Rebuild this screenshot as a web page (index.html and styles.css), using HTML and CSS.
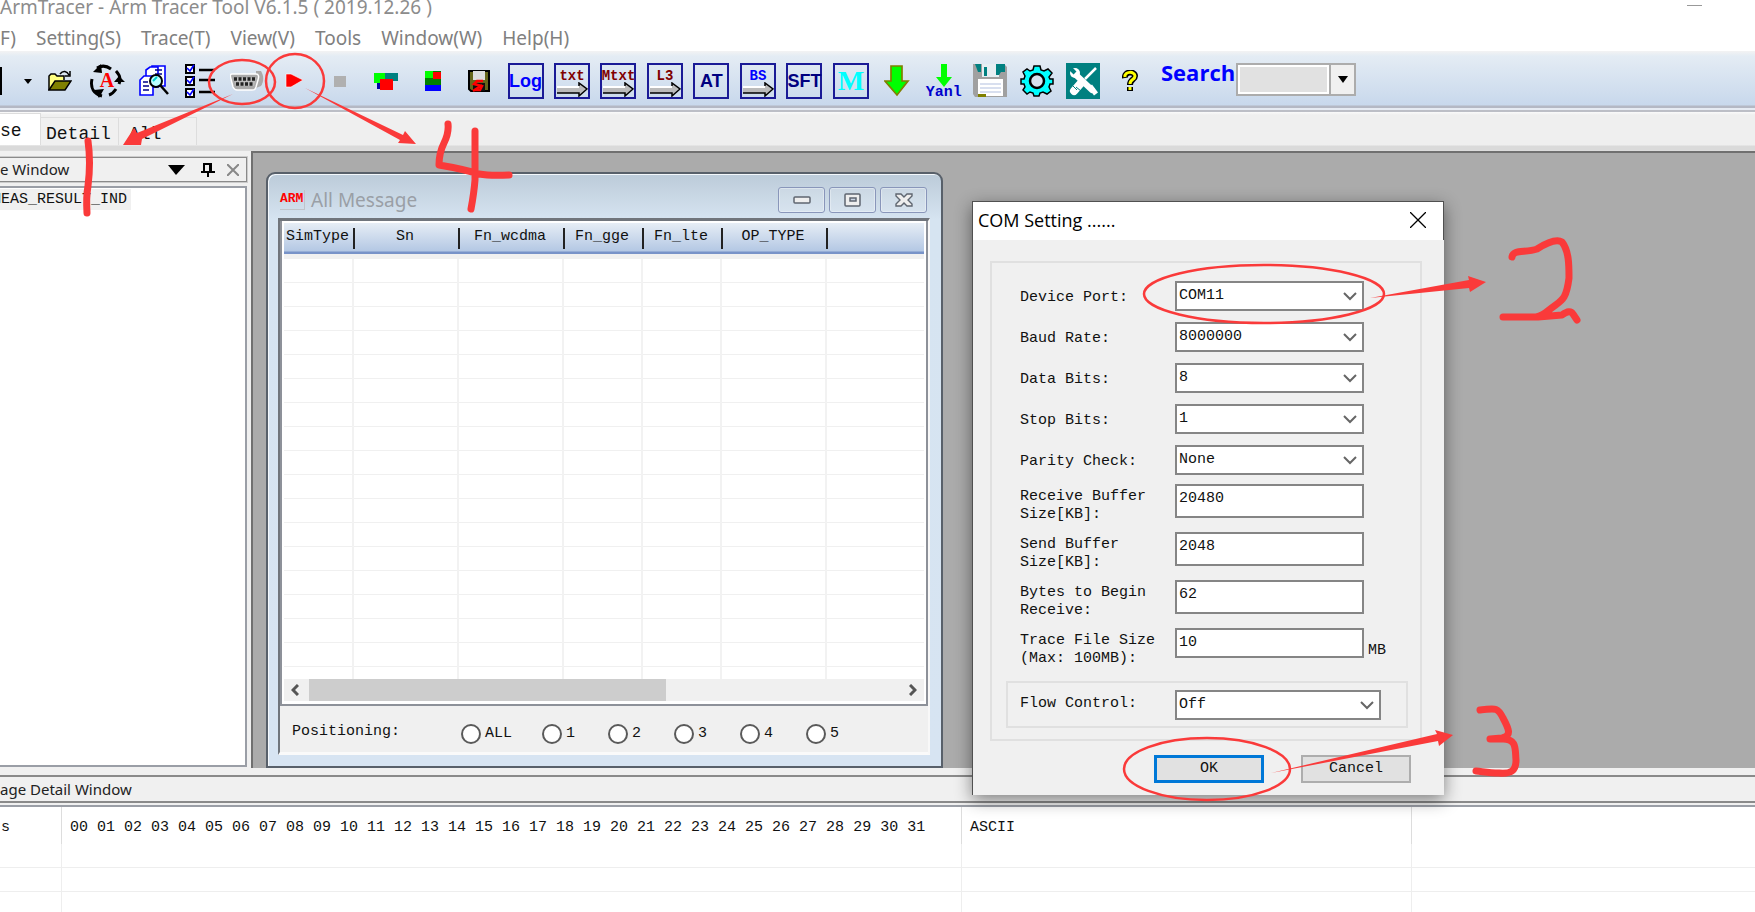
FILE: index.html
```html
<!DOCTYPE html>
<html lang="en">
<head>
<meta charset="utf-8">
<title>ArmTracer</title>
<link rel="stylesheet" href="styles.css">
</head>
<body>
<div class="app">
  <header class="titlebar">
    <span>ArmTracer - Arm Tracer Tool V6.1.5 ( 2019.12.26 )</span>
    <button class="minimize" aria-label="Minimize"></button>
  </header>
  <nav class="menubar">
    <button>F)</button><button>Setting(S)</button><button>Trace(T)</button><button>View(V)</button><button>Tools</button><button>Window(W)</button><button>Help(H)</button>
  </nav>
  <div class="toolbar">
    <div class="tool-start">
      <i class="stub"></i>
      <button aria-label="New options"><svg width="8" height="5"><path d="M0 0h8L4 5z"/></svg></button>
      <button aria-label="Open"><svg width="24" height="22" viewBox="0 0 24 22"><path d="M1 20V6l2-2h4l2 2h7v4" fill="#ffff80" stroke="#000" stroke-width="1.5"/><path d="M1 20l6-9h16l-6 9z" fill="#808000" stroke="#000" stroke-width="1.5"/><path d="M12 4c3-4 7-3 9 1M22 1v5h-5" fill="none" stroke="#000" stroke-width="1.5"/></svg></button>
    </div>
    <div class="tools">
      <button aria-label="Auto refresh"><svg width="36" height="36" viewBox="0 0 36 36"><g fill="none" stroke="#000" stroke-width="3"><path d="M8 5c5-3 10-2 14 1M27 8c4 4 5 8 3 13M27 26c-2 3-4 5-7 6M13 33C5 31 1 25 3 16"/></g><path d="M4 9l8-8 1 9zM25 19l5-6 6 6zM5 27l10-1-5 9z"/><text x="18" y="24" class="ic-a">A</text></svg></button>
      <button aria-label="Find in files"><svg width="32" height="34" viewBox="0 0 32 34"><g fill="#fff" stroke="#00f" stroke-width="1.6"><path d="M14 2h13v20H14z"/><path d="M8 6l4-3h8v20H8z"/><path d="M2 16l4-4h9v19H2z"/></g><path d="M17 6h7M17 10h7M5 18h5M5 22h6M5 26h6" stroke="#008" stroke-width="1.5"/><circle cx="18" cy="17" r="6" fill="#bff" stroke="#000" stroke-width="2"/><path d="M22 21l8 9" stroke="#000" stroke-width="2.5"/><path d="M15 17l4-4" stroke="#0cc" stroke-width="2"/></svg></button>
      <button aria-label="Filter list"><svg width="30" height="36" viewBox="0 0 30 36"><g fill="#fff" stroke="#000" stroke-width="2"><path d="M1 2h8v8H1zM1 14h8v8H1zM1 26h8v8H1z"/></g><path d="M2 5l3 3 4-6M2 17l3 3 4-6M2 29l3 3 4-6" fill="none" stroke="#00f" stroke-width="1.7"/><path d="M14 7h16M14 17h16M14 29h16" stroke="#000" stroke-width="2.5"/></svg></button>
      <button aria-label="COM setting"><svg width="34" height="22" viewBox="0 0 34 22"><path d="M26 1h5c3 5 3 10 0 15l-5 2z" fill="#aaa"/><path d="M2 4h24c3 0 3 3 2 6l-2 7c-1 3-2 3-4 3H7c-2 0-3-1-4-3L1 9c-1-3-1-5 1-5z" fill="#aaa" stroke="#fff" stroke-width="1.5"/><path d="M4 8h22l-2 8H6z" fill="#bbb"/><path d="M4 9h22M6 14h18" stroke="#222" stroke-width="3.5" stroke-dasharray="3 1.5"/></svg></button>
      <button aria-label="Start"><svg width="20" height="18" viewBox="0 0 20 18"><path d="M3 2h5l12 6-12 7H3z" fill="red" stroke="#fff" stroke-width=".6"/></svg></button>
      <button aria-label="Stop"><svg width="12" height="11"><path d="M0 0h12v11H0z" fill="#b0b0b0"/></svg></button>
      <button aria-label="Cascade"><svg width="24" height="18"><path d="M10 1h14v8H10z" fill="#008080"/><path d="M3 8h12v9H3z" fill="#00a"/><path d="M0 1h11v10H0z" fill="#0f0"/><path d="M6 7h13v11H6z" fill="red"/></svg></button>
      <button aria-label="Tile"><svg width="18" height="20"><path d="M1 0h16v20H1z" fill="#008000"/><path d="M1 0h8v7H1z" fill="#0f0"/><path d="M9 1h8v7H9z" fill="red"/><path d="M1 14h16v6H1z" fill="#00f"/></svg></button>
      <button aria-label="Save"><svg width="22" height="22" viewBox="0 0 22 22"><path d="M1 1h20v20H3l-2-2z" fill="#66661a" stroke="#000" stroke-width="2"/><path d="M5 1h12v9H5z" fill="#ddd"/><path d="M5 13h12v8H5z" fill="#111"/><path d="M15 11H9l-3 3 8 2-2 4H6M5 21l9-6" stroke="red" stroke-width="2.5" fill="none"/></svg></button>
      <button class="boxed log">Log</button>
      <button class="boxed conv"><span>txt</span><svg width="32" height="15"><use href="#arrow"/></svg></button>
      <button class="boxed conv"><span>Mtxt</span><svg width="32" height="15"><use href="#arrow"/></svg></button>
      <button class="boxed conv"><span>L3</span><svg width="32" height="15"><use href="#arrow"/></svg></button>
      <button class="boxed at">AT</button>
      <button class="boxed conv bs"><span>BS</span><svg width="32" height="15"><use href="#arrow"/></svg></button>
      <button class="boxed at">SFT</button>
      <button class="boxed m">M</button>
      <button aria-label="Download"><svg width="26" height="32" viewBox="0 0 26 32"><path d="M7 1h11v15h6L13 30 1 16h6z" fill="#0f0" stroke="#808000" stroke-width="1.7"/></svg></button>
      <button class="yanl"><svg width="16" height="23"><path d="M5 0h6v13h5l-8 10L0 13h5z" fill="#0f0"/></svg><span>Yanl</span></button>
      <button aria-label="Save all"><svg width="36" height="36" viewBox="0 0 36 36"><path d="M1 1h31l3 3v30H3l-2-3z" fill="#a0a0a0"/><path d="M10 1h17v13H10z" fill="#e6eef2"/><path d="M3 1h6v8H6zM24 1h9v8h-4l-2 3h-3zM12 4h3v9h-3z" fill="#008080"/><path d="M6 16h25v17H6z" fill="#fff"/><path d="M8 21h21M8 25h21M8 29h21" stroke="#ccd5ea" stroke-width="1.5"/><path d="M6 31h8v3H6z" fill="#808000"/></svg></button>
      <button aria-label="Options"><svg width="34" height="34" viewBox="-17 -17 34 34"><g fill="#0ff" stroke="#000" stroke-width="1.5"><path d="M-3-15h6l1 4 3 1 4-2 4 4-3 4 1 2h3v5h-3l-1 3 2 4-4 3-4-2-3 1-1 3h-5l-1-3-3-1-3 2-4-4 2-3-1-3h-3v-5h3l1-3-2-4 4-3 3 2 3-1z"/><circle r="7" fill="#d6e2ef" stroke-width="2.5"/></g></svg></button>
      <button aria-label="Tools"><svg width="34" height="36" viewBox="0 0 34 36"><path d="M0 0h34v36H0z" fill="#008080"/><path d="M10 12l16 15" stroke="#fff" stroke-width="6" stroke-linecap="round"/><circle cx="9" cy="10" r="5" fill="#fff"/><path d="M4 5l5 5" stroke="#008080" stroke-width="4"/><path d="M30 5L19 16" stroke="#fff" stroke-width="2.5"/><path d="M15 20l-7 8" stroke="#fff" stroke-width="8" stroke-linecap="round"/><path d="M6 22l5 5M10 24l5 4" stroke="#008080"/><path d="M24 23l6 8" stroke="#fff" stroke-width="5"/></svg></button>
      <button aria-label="Help"><svg width="16" height="22" viewBox="0 0 16 22"><g fill="none" stroke="#000" stroke-width="6"><path d="M3 8c-1-7 10-7 10-2 0 4-5 3-5 9M8 17v4"/></g><path d="M3 7c-1-6 10-6 10-1 0 4-5 3-5 8M8 17v3" fill="none" stroke="#ff0" stroke-width="3"/></svg></button>
    </div>
    <label class="search-label" for="search">Search</label>
    <div class="search-box"><input id="search" type="text"><button aria-label="Search history"><svg width="10" height="7"><path d="M0 0h10L5 7z"/></svg></button></div>
  </div>
  <div class="tabs">
    <button class="tab active">se</button><button class="tab">Detail</button><button class="tab last">All</button>
  </div>
  <main class="work">
    <aside class="side">
      <div class="side-head"><span>e Window</span>
        <button aria-label="Menu"><svg width="17" height="10"><path d="M0 0h17L8 10z"/></svg></button>
        <button aria-label="Pin"><svg width="14" height="14" fill="none" stroke="#000" stroke-width="2"><path d="M3 9V1h7v8M0 9h14M7 9v5M9 1v8"/></svg></button>
        <button aria-label="Close"><svg width="12" height="12" stroke="#888" stroke-width="2"><path d="M0 0l12 12M12 0L0 12"/></svg></button>
      </div>
      <div class="tree"><span>MEAS_RESULT_IND</span></div>
    </aside>
    <section class="mdi">
      <div class="child">
        <div class="child-title">
          <b class="arm">ARM</b><span>All Message</span>
          <button aria-label="Minimize"><svg width="18" height="10"><rect x="1" y="2" width="16" height="6" rx="1" fill="#eee" stroke="#5f6670" stroke-width="1.5"/></svg></button>
          <button aria-label="Maximize"><svg width="18" height="14"><rect x="1" y="1" width="15" height="12" rx="1" fill="#eee" stroke="#5f6670" stroke-width="1.5"/><path d="M6 5h6v3H6z" fill="#ccd6e4" stroke="#5f6670" stroke-width="1.5"/></svg></button>
          <button aria-label="Close"><svg width="18" height="14" viewBox="0 0 18 14"><path d="M1 1h5l3 3 3-3h5v2l-4 4 4 4v2h-5l-3-3-3 3H1v-2l4-4-4-4z" fill="#eee" stroke="#5f6670" stroke-width="1.4"/></svg></button>
        </div>
        <div class="child-body">
          <div class="list">
            <table class="messages">
              <colgroup><col class="c70"><col class="c105"><col class="c105"><col class="c79"><col class="c79"><col class="c105"><col></colgroup>
              <thead><tr><th>SimType</th><th>Sn</th><th>Fn_wcdma</th><th>Fn_gge</th><th>Fn_lte</th><th>OP_TYPE</th><th></th></tr></thead>
              <tbody><tr><td></td><td></td><td></td><td></td><td></td><td></td><td></td></tr></tbody>
            </table>
            <div class="scroll"><svg width="8" height="12"><path d="M7 1L2 6l5 5"/></svg><i></i><svg width="8" height="12"><path d="M1 1l5 5-5 5"/></svg></div>
          </div>
          <div class="positions">
            <span>Positioning:</span>
            <label class="all"><input type="radio" name="pos">ALL</label>
            <label><input type="radio" name="pos">1</label>
            <label><input type="radio" name="pos">2</label>
            <label><input type="radio" name="pos">3</label>
            <label><input type="radio" name="pos">4</label>
            <label><input type="radio" name="pos">5</label>
          </div>
        </div>
      </div>
    </section>
  </main>
  <section class="detail">
    <h2>age Detail Window</h2>
    <table>
      <colgroup><col class="d1"><col class="d2"><col class="d3"><col></colgroup>
      <thead><tr><th>s</th><th>00 01 02 03 04 05 06 07 08 09 10 11 12 13 14 15 16 17 18 19 20 21 22 23 24 25 26 27 28 29 30 31</th><th>ASCII</th><th></th></tr></thead>
      <tbody><tr><td></td><td></td><td></td><td></td></tr><tr><td></td><td></td><td></td><td></td></tr><tr><td></td><td></td><td></td><td></td></tr></tbody>
    </table>
  </section>

  <form class="dialog">
    <div class="dialog-title"><span>COM Setting ......</span><button type="button" aria-label="Close"><svg width="16" height="16" stroke="#000" stroke-width="1.3"><path d="M0 0l16 16M16 0L0 16"/></svg></button></div>
    <div class="group">
      <div class="fields">
        <div class="row"><label for="port">Device Port:</label><select id="port"><option>COM11</option></select></div>
        <div class="row"><label for="baud">Baud Rate:</label><select id="baud"><option>8000000</option></select></div>
        <div class="row"><label for="data">Data Bits:</label><select id="data"><option>8</option></select></div>
        <div class="row"><label for="stop">Stop Bits:</label><select id="stop"><option>1</option></select></div>
        <div class="row"><label for="parity">Parity Check:</label><select id="parity"><option>None</option></select></div>
      </div>
      <div class="fields sizes">
        <div class="row"><label for="rbuf">Receive Buffer Size[KB]:</label><input id="rbuf" type="text" value="20480"></div>
        <div class="row"><label for="sbuf">Send Buffer Size[KB]:</label><input id="sbuf" type="text" value="2048"></div>
        <div class="row"><label for="bytes">Bytes to Begin Receive:</label><input id="bytes" type="text" value="62"></div>
        <div class="row"><label for="trace">Trace File Size (Max: 100MB):</label><input id="trace" class="short" type="text" value="10"><span class="unit">MB</span></div>
      </div>
      <div class="flow"><label for="flow">Flow Control:</label><select id="flow"><option>Off</option></select></div>
    </div>
    <div class="actions"><button type="button" class="ok">OK</button><button type="button">Cancel</button></div>
  </form>

  <svg class="marks">
    <defs><g id="arrow"><path d="M1 4h22V1l8 6-8 7v-3H1z" fill="#bbb"/><path d="M1 5h22" stroke="#fff" stroke-width="2"/><path d="M1 11h22v3l8-7-8-6v3" fill="none" stroke="#000" stroke-width="1.5"/></g></defs>
    <g class="ring"><ellipse cx="242" cy="82" rx="33" ry="22"/><ellipse cx="295" cy="81" rx="29" ry="27"/><ellipse cx="1264" cy="294" rx="120" ry="29"/><ellipse cx="1207" cy="769" rx="83" ry="31"/></g>
    <g class="tip"><path d="M233 94L137 133 134 128 123 145 141 145 142 139z"/><path d="M305 88L403 135 405 131 416 144 398 143 400 140z"/><path d="M1370 298L1469 280 1468 276 1486 282 1470 292 1469 288z"/><path d="M1271 773L1437 734 1435 730 1453 735 1439 746 1438 741z"/></g>
    <g class="pen"><path d="M88 141Q91 162 88 186Q86 197 87 213"/><path d="M448 124Q449 133 444 143Q439 153 439 165Q463 169 479 174Q490 176 509 175M475 131L475 180Q474 193 471 209"/><path d="M1512 257C1513 249 1525 253 1537 249C1548 242 1557 239 1562 242C1569 251 1569 265 1569 278C1566 302 1561 300 1549 310Q1542 316 1536 317H1503H1538L1562 315Q1570 309 1573 314L1577 320"/><path d="M1480 710C1497 708 1498 708 1503 718C1509 729 1512 736 1502 738L1490 739H1503C1517 739 1515 749 1516 760C1516 771 1511 774 1499 773C1490 773 1485 772 1476 771"/></g>
  </svg>
</div>
</body>
</html>
```
FILE: styles.css
```css
* { box-sizing: border-box; }
body { margin: 0; font: 15px/18px "Liberation Mono", monospace; color: #111; }
button, input, select { font: inherit; color: inherit; margin: 0; padding: 0; border: 0; background: none; }
svg { display: block; flex: none; }

.app { position: relative; display: flex; flex-direction: column; height: 100vh; overflow: hidden; background: #f0f0f0; }

.titlebar { display: flex; justify-content: space-between; height: 24px; padding-right: 53px; background: #fff; color: #8c8c8c; font: 19px/14px "Noto Sans", sans-serif; }
.minimize { width: 15px; height: 6px; border-bottom: 1px solid #999; }
.menubar { display: flex; gap: 20px; height: 27px; background: #fff; color: #808080; font: 19px/28px "Noto Sans", sans-serif; }

.toolbar { display: flex; align-items: flex-start; height: 61px; padding-top: 12px; background: linear-gradient(#f3f3f3, #e4ecf4 5px, #c8d8ec 54px, #b4b8c4 55px, #b4b8c4 57px, #e6ebf3 57px, #e6ebf3 59px, #bcbec6 59px); }
.toolbar button { display: flex; align-items: center; justify-content: center; }
.tool-start { display: flex; align-items: center; width: 84px; height: 36px; }
.stub { width: 2px; height: 28px; margin-right: 22px; background: #000; }
.tool-start button + button { margin-left: 16px; }
.tools { display: grid; grid-template-columns: repeat(23, 1fr); width: 1069px; height: 36px; align-items: center; justify-items: center; }
.toolbar .boxed { width: 36px; height: 36px; border: 2px solid #1a1a96; white-space: nowrap; }
.toolbar .log { color: #00f; font: bold 18px/30px "Liberation Sans", sans-serif; }
.toolbar .at { color: #000080; font: bold 18px/30px "Liberation Sans", sans-serif; }
.toolbar .m { color: #0ff; font: bold 28px/30px "Liberation Serif", serif; }
.toolbar .conv { flex-direction: column; padding-top: 5px; color: #800000; font: bold 14px/12px "Liberation Mono", monospace; }
.toolbar .bs { color: #00f; }
.toolbar .yanl { flex-direction: column; color: #00c; font: bold 15px/12px "Liberation Mono", monospace; }
.ic-a { fill: red; font: bold 20px "Liberation Serif", serif; text-anchor: middle; }
.search-label { margin-left: 8px; width: 75px; color: #00f; font: bold 22px/18px "Open Sans", sans-serif; }
.search-box { display: flex; width: 120px; height: 33px; border: 2px solid #acacac; background: #f0f0f0; }
.search-box input { flex: 1; min-width: 0; border: 2px solid #fff; background: #e1e1e1; }
.search-box button { width: 25px; border-left: 2px solid #acacac; }

.tabs { display: flex; align-items: flex-end; height: 39px; padding-bottom: 5px; border-bottom: 1px solid #ddd; background: linear-gradient(#fafafa, #efefef 3px, #efefef 33px, #dadada 34px); font-size: 18px; }
.tab { height: 28px; padding: 4px 7px 0; border: 1px solid #ddd; border-width: 1px 1px 0 0; background: #f0f0f0; text-align: left; }
.tab.active { height: 32px; width: 41px; padding: 2px 0 0; background: #fff; }
.tab:not(.active) { width: 78px; padding-left: 5px; }
.tab.last { padding-left: 10px; }

.work { display: flex; flex: 1; min-height: 0; padding-bottom: 7px; }
.side { display: flex; flex-direction: column; width: 247px; padding: 6px 0 1px; gap: 4px; }
.side-head { display: flex; align-items: center; height: 25px; padding-right: 7px; gap: 16px; border: 1px solid #8a8a8a; border-left: 0; outline: 1px solid #ccc; font: 15px/23px "Noto Sans", sans-serif; color: #222; }
.side-head span { flex: 1; }
.side-head button { display: flex; }
.side-head button:nth-of-type(2) { margin-right: -4px; }
.tree { flex: 1; border: 2px solid #9a9ea6; border-left: 0; background: #fff; padding-top: 1px; }
.tree span { display: inline-block; height: 21px; line-height: 21px; margin-left: -8px; padding-right: 4px; background: #f0f0f0; }
.mdi { position: relative; flex: 1; margin-left: 4px; background: #ababab; border: 2px solid #707070; border-right: 0; border-bottom: 0; }

.child { position: absolute; left: 13px; top: 19px; width: 677px; height: 596px; display: flex; flex-direction: column; padding: 0 11px 11px 10px; border: 2px solid #58606a; border-radius: 9px 9px 0 0; background: linear-gradient(#bccbd9, #d6e4f1 46px, #d7e4f2); box-shadow: inset 1px 1px #f4f8fc; }
.child-title { display: flex; align-items: center; height: 44px; padding: 8px 3px 0 2px; gap: 4px; color: #9a9fa6; font: 19px/24px "Noto Sans", sans-serif; }
.child-title span { flex: 1; padding-left: 2px; }
.arm { width: 25px; height: 20px; color: red; font: bold 13px/18px "Liberation Mono", monospace; border: 1px solid #c0c4ca; border-width: 0 1px 1px 0; }
.child-title button { display: flex; align-items: center; justify-content: center; width: 47px; height: 26px; border: 1px solid #8996ba; border-radius: 3px; background: #ffffff22; box-shadow: inset 0 0 0 1px #ffffff55; }
.child-body { flex: 1; display: flex; flex-direction: column; min-height: 0; background: #f0f0f0; border: 3px solid #70757c; border-right: 2px solid #f8f8f8; border-bottom-color: #fafafa; border-left-width: 2px; }
.list { flex: 1; display: flex; flex-direction: column; padding: 2px 2px 3px; background: #fff; border: 2px solid #8d9199; border-width: 0 2px 2px; min-height: 0; }
.messages { width: 100%; height: 458px; border-collapse: separate; border-spacing: 0; table-layout: fixed; }
.c70 { width: 70px; } .c79 { width: 79px; } .c105 { width: 105px; }
.messages th { position: relative; height: 36px; padding: 0 3px 9px 0; font-weight: 400; background: linear-gradient(#e6edf5, #b4c8e4 28px, #7893c8 29px, #7893c8 31px, #f0f0f0 31px); }
.messages th:not(:last-child)::after { content: ""; position: absolute; right: -1px; top: 5px; width: 2px; height: 21px; background: #222; z-index: 1; }
.messages td { padding: 0; border-right: 2px solid #f2f2f2; background: repeating-linear-gradient(#fff 0 23px, #f0f0f0 23px 24px); }
.messages td:last-child { border-right: 0; }
.scroll { display: flex; align-items: center; height: 22px; padding: 0 7px; background: #f0f0f0; }
.scroll i { width: 57%; height: 22px; margin: 0 auto 0 10px; background: #cdcdcd; }
.scroll svg { fill: none; stroke: #555; stroke-width: 3; }
.positions { display: flex; align-items: center; height: 46px; padding: 10px 0 0 12px; }
.positions span { width: 169px; padding-bottom: 4px; }
.positions label { display: flex; align-items: center; gap: 4px; width: 66px; }
.positions .all { width: 81px; }
.positions input { appearance: none; width: 20px; height: 20px; border: 2px solid #5a5a5a; border-radius: 50%; background: #fff; }

.detail { height: 137px; }
.detail h2 { height: 28px; margin: 0; border: 2px solid #8a8a8a; border-width: 2px 0; font: 15px/24px "Noto Sans", sans-serif; color: #222; }
.detail table { width: 100%; margin-top: 2px; border-top: 2px solid #9a9ea6; border-spacing: 0; table-layout: fixed; background: #fff; }
.d1 { width: 62px; } .d2 { width: 900px; } .d3 { width: 450px; }
.detail th { height: 37px; padding: 4px 0 0 8px; font-weight: 400; text-align: left; white-space: nowrap; border-right: 1px solid #ddd; }
.detail th:first-child { padding-left: 1px; }
.detail td { height: 24px; border: 1px solid #eee; border-width: 0 1px 1px 0; }
.detail th:last-child, .detail td:last-child { border-right: 0; }

.dialog { position: absolute; left: 972px; top: 201px; width: 472px; background: #f0f0f0; border: 1px solid #505050; border-width: 1px 0 0 1px; box-shadow: 0 5px 16px #0007; padding-bottom: 12px; }
.dialog-title { display: flex; justify-content: space-between; align-items: center; height: 38px; padding: 0 17px 2px 5px; background: #fff; border-right: 1px solid #505050; color: #000; font: 18px/34px "Open Sans", sans-serif; }
.group { margin: 21px 22px 0 17px; padding: 18px 12px 11px 14px; border: 2px solid #e0e0e0; }
.fields { display: grid; gap: 11px; padding-left: 14px; }
.row { display: grid; grid-template-columns: 155px 189px 1fr; align-items: center; }
.row label { padding: 3px 8px 0 0; }
.sizes { gap: 14px; margin-top: 9px; }
.sizes .row { height: 34px; align-items: start; }
.sizes .row label { padding: 4px 0 0; }
.dialog select, .row input { width: 100%; height: 30px; padding: 0 4px 1px 2px; border: 2px solid #858585; border-radius: 0; background: #fff; }
.row input { height: 34px; padding-bottom: 6px; }
.row .short { height: 30px; padding-bottom: 2px; }
.dialog select { appearance: none; background: #fff url("data:image/svg+xml,%3Csvg xmlns='http://www.w3.org/2000/svg' width='14' height='9'%3E%3Cpath d='M1 1l6 6 6-6' fill='none' stroke='%23666' stroke-width='2'/%3E%3C/svg%3E") no-repeat right 5px center; }
.unit { padding: 14px 0 0 4px; }
.flow { display: grid; grid-template-columns: 155px 206px; align-items: center; margin-top: 19px; padding: 7px 12px 6px; border: 2px solid #e0e0e0; }
.flow label { padding-bottom: 2px; }
.actions { display: flex; justify-content: flex-end; gap: 37px; padding: 14px 33px 0; }
.actions button { width: 110px; height: 28px; border: 2px solid #adadad; background: #e1e1e1; }
.actions .ok { border: 3px solid #0078d7; }

.marks { position: absolute; inset: 0; width: 100%; height: 100%; pointer-events: none; }
.ring { fill: none; stroke: #fa3a3a; stroke-width: 2.5; }
.tip { fill: #fa3a3a; }
.pen { fill: none; stroke: #fa3a3a; stroke-width: 7; stroke-linecap: round; stroke-linejoin: round; }
```
